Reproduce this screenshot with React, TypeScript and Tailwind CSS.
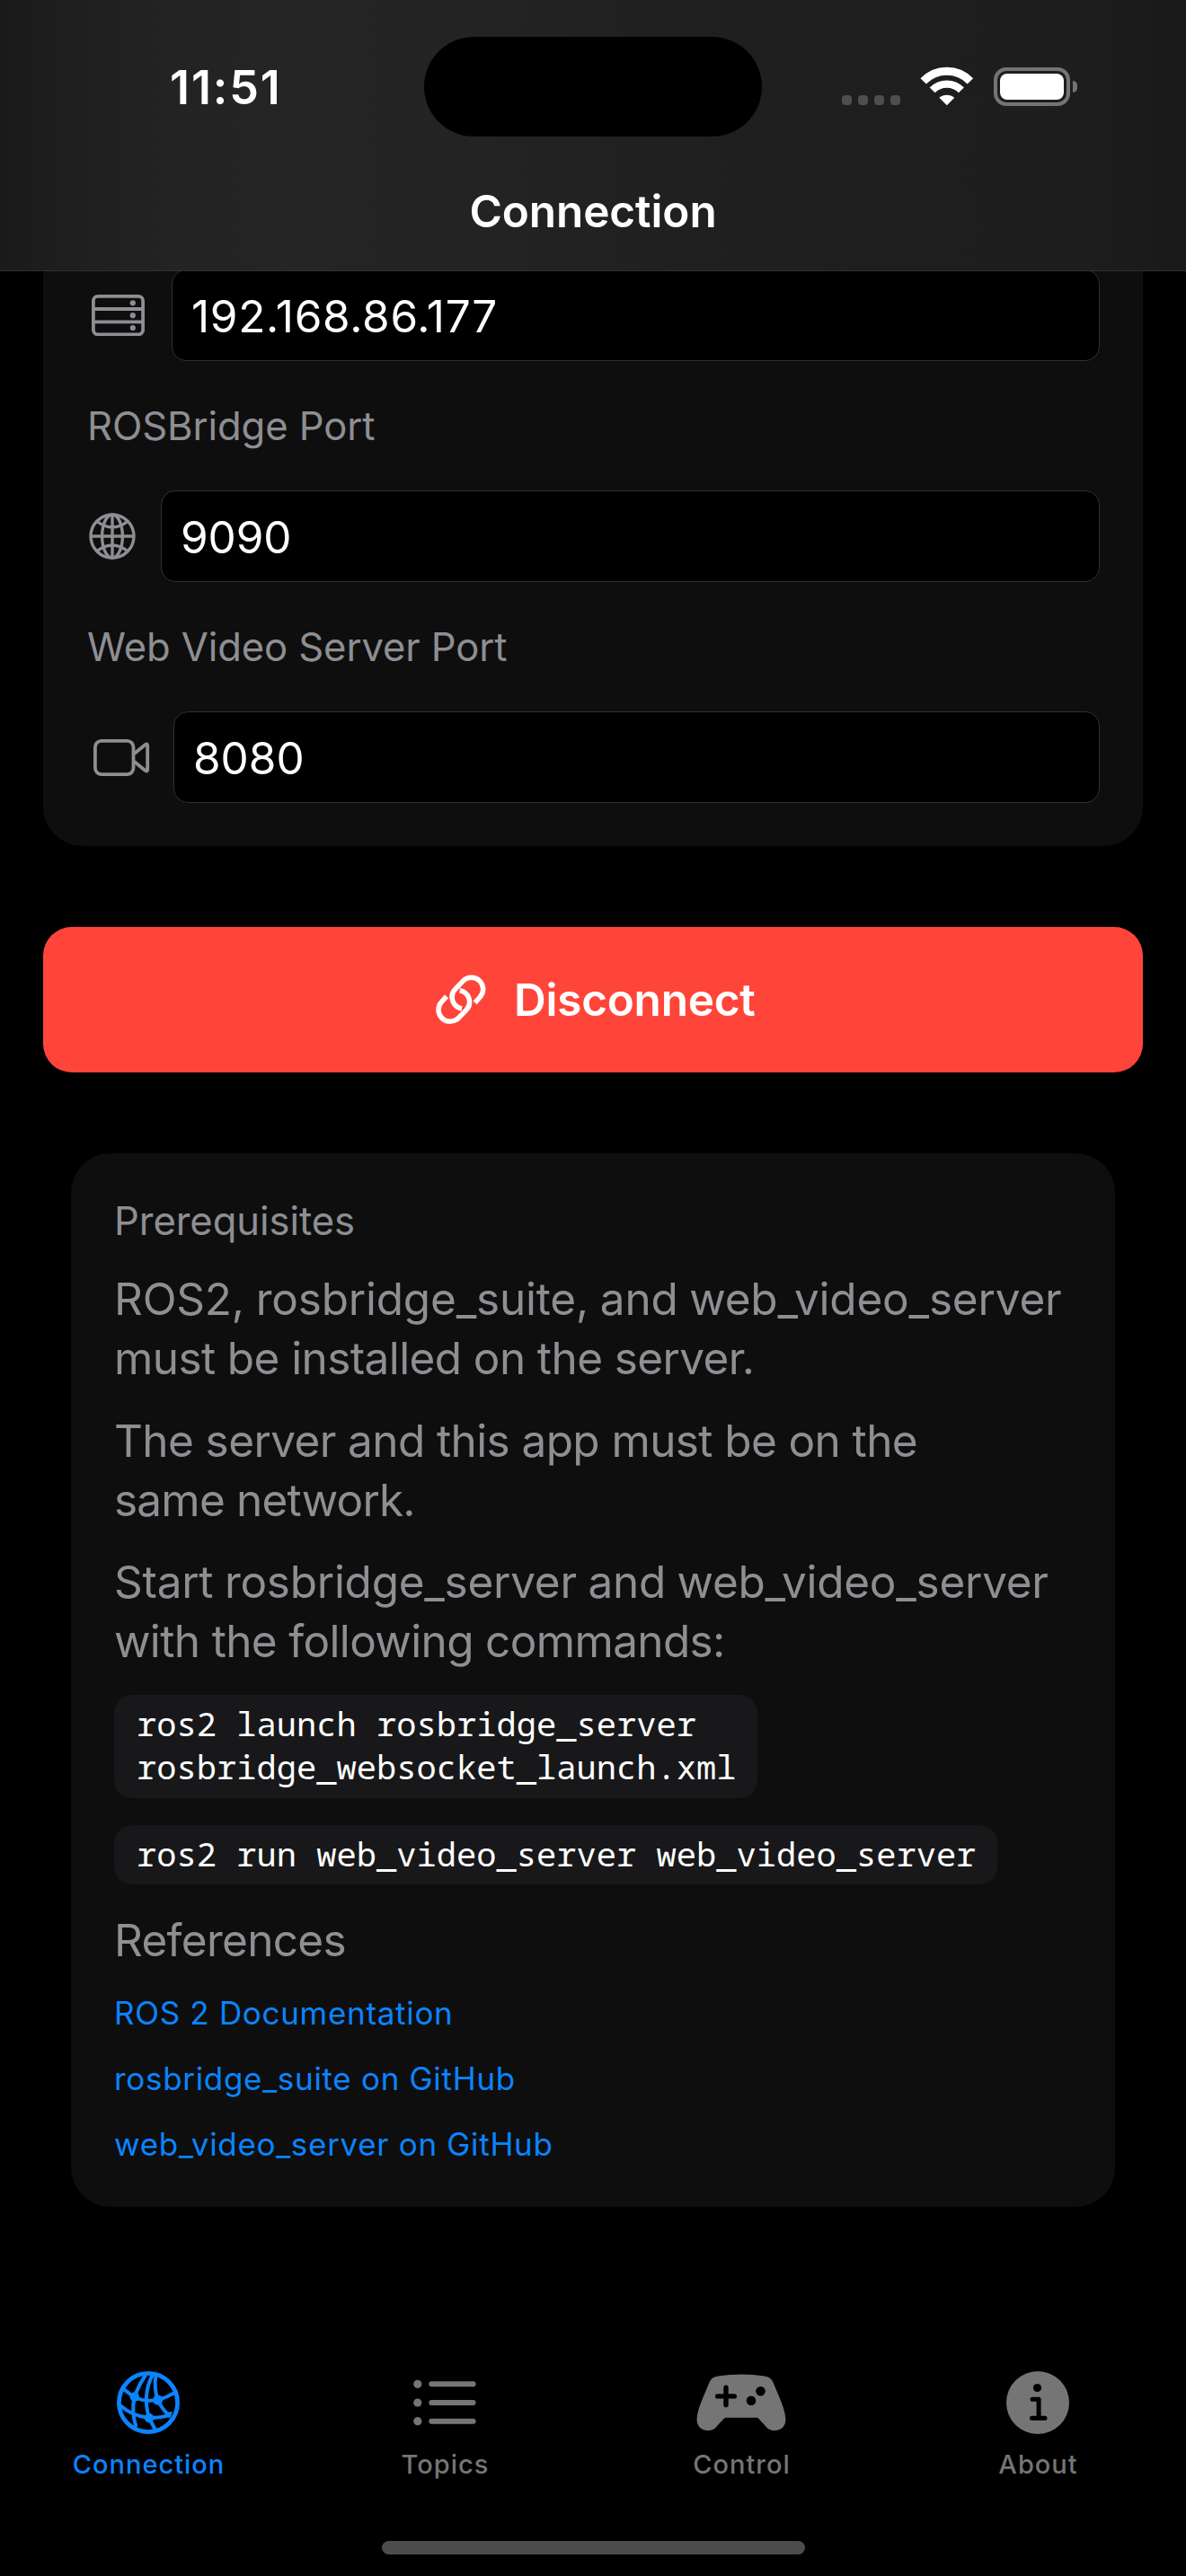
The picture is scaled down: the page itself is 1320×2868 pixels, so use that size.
import React, { ReactNode } from "react";

function StatusBar() {
  return (
    <div className="flex h-[190px] items-start">
      <div className="w-[472px] pt-[64px] pl-[189px] text-[52px] leading-[68px] font-semibold tracking-[1.9px]">11:51</div>
      <div className="mt-[41px] h-[111px] w-[376px] rounded-full bg-black" />
      <div className="mt-[74px] ml-[89px] flex items-start">
        <div className="mt-[32px] flex gap-[7px]">
          {[0, 1, 2, 3].map((i) => (
            <span key={i} className="h-[11px] w-[11px] rounded-[4px] bg-[#4e4e4e]" />
          ))}
        </div>
        <svg className="ml-[22px] h-[45px] w-[60px]" viewBox="0 0 60 45">
          <g fill="none" stroke="#fff">
            <path d="M3.7 16.4 A36.2 36.2 0 0 1 55.9 16.4" strokeWidth="9" />
            <path d="M13.7 26.4 A22.5 22.5 0 0 1 45.9 26.4" strokeWidth="8.4" />
          </g>
          <path d="M21.3 34.8 A13 13 0 0 1 38.3 34.8 L29.8 43.3 Z" fill="#fff" />
        </svg>
        <div className="mt-[1px] ml-[22px] h-[43px] w-[85px] rounded-[14px] border-[4px] border-[#747474] p-[3px]">
          <div className="h-full w-full rounded-[8px] bg-white" />
        </div>
        <div className="mt-[16px] ml-[3px] h-[13px] w-[5px] rounded-r-full bg-[#747474]" />
      </div>
    </div>
  );
}

function ServerIcon() {
  return (
    <svg className="h-[46px] w-[59px]" viewBox="0 0 59 46">
      <g fill="none" stroke="#8e8e93" strokeWidth="3.8">
        <rect x="1.9" y="1.9" width="55.2" height="42.4" rx="5" />
        <path d="M2 16H57M2 30.3H57" />
      </g>
      <g fill="#8e8e93">
        <circle cx="45.8" cy="9.3" r="3.1" />
        <circle cx="45.8" cy="23.2" r="3.1" />
        <circle cx="45.8" cy="37" r="3.1" />
      </g>
    </svg>
  );
}

function GlobeIcon() {
  return (
    <svg className="h-[52px] w-[52px]" viewBox="0 0 52 52" fill="none" stroke="#8e8e93" strokeWidth="3.4">
      <circle cx="26" cy="26" r="24" />
      <ellipse cx="26" cy="26" rx="11.4" ry="24" />
      <path d="M26 2V50M2 26H50M9 9.5Q26 22.5 43 9.5M9 42.5Q26 29.5 43 42.5" />
    </svg>
  );
}

function VideoIcon() {
  return (
    <svg className="h-[41px] w-[63px]" viewBox="0 0 63 41" fill="none" stroke="#8e8e93" strokeWidth="3.8" strokeLinejoin="round">
      <rect x="1.9" y="1.9" width="42.6" height="37.2" rx="7" />
      <path d="M45.5 16 L57.5 6.2 Q60.2 4.3 60.2 7 V34 Q60.2 36.7 57.5 34.8 L45.5 25" />
    </svg>
  );
}

function LinkIcon() {
  return (
    <svg className="h-[58px] w-[58px]" viewBox="41 42 174 174" fill="none" stroke="#fff" strokeWidth="16.5">
      <path d="M175 139 L190.6 121.6 A39 39 0 0 0 135.4 66.4 L109.4 93.4 A39 39 0 0 0 131 159" />
      <path d="M80 118 L64.4 135.4 A39 39 0 0 0 119.6 190.6 L145.6 163.6 A39 39 0 0 0 124 98" />
    </svg>
  );
}

function Field({ icon, value }: { icon: ReactNode; value: string }) {
  return (
    <div className="flex h-[102px] items-center">
      {icon}
      <div className="flex h-[102px] flex-1 items-center rounded-[16px] border border-[#303032] bg-black pt-[2px] pl-[21px] text-[49.5px]">
        {value}
      </div>
    </div>
  );
}

function Label({ children }: { children: ReactNode }) {
  return (
    <div className="mt-[46px] mb-[44px] h-[54px] text-[43.6px] leading-[54px] tracking-[-0.1px] whitespace-nowrap text-[#8e8e93]">
      {children}
    </div>
  );
}

function Tab({ label, color, icon }: { label: string; color: string; icon: ReactNode }) {
  return (
    <div className={`flex w-[330px] flex-col items-center ${color}`}>
      <div className="flex h-[72px] items-center">{icon}</div>
      <div className="mt-[15px] pl-px text-[29px] leading-[36px] font-medium tracking-[1px]">{label}</div>
    </div>
  );
}

const networkIcon = (
  <svg className="h-[72px] w-[72px]" viewBox="14 14 72 72" fill="none" stroke="currentColor" strokeWidth="4">
    <circle cx="50" cy="50" r="32.6" strokeWidth="4.8" />
    <path d="M21.7 34.3L34.7 44Q39 31 47.3 19M34.7 44Q31 60 36.5 77M34.7 44Q47 49.5 60.7 47Q71 44 79 39.3M60.7 47Q56 34 58.5 19.5M55 18.5Q43 42 51 67Q54.5 74 57.7 80M19 53.3Q32 65 51 67Q64 67 75 63.3M60.7 47Q65 57 73 64" />
    <g fill="currentColor" stroke="none">
      <circle cx="34.7" cy="43.5" r="5.2" />
      <circle cx="60.7" cy="47" r="5.5" />
      <circle cx="51" cy="67" r="5.2" />
      <path d="M69 61L77 60L74 68Z" />
    </g>
  </svg>
);

const listIcon = (
  <svg className="h-[52px] w-[70px]" viewBox="0 0 70 52" fill="currentColor">
    {[5.3, 26, 46.7].map((y) => (
      <g key={y}>
        <circle cx="4.8" cy={y} r="4.6" />
        <rect x="17.3" y={y - 3} width="52.3" height="6" rx="3" />
      </g>
    ))}
  </svg>
);

const gamepadIcon = (
  <svg className="h-[64px] w-[100px]" viewBox="0 0 100 64">
    <path
      fill="currentColor"
      d="M14.5 9.5 C16.5 4.8 19 3.4 24 2.4 C40 -0.3 60 -0.3 76 2.4 C81 3.4 83.5 4.8 85.5 9.5 C91 23 99.4 40 99.4 51 C99.4 58 94.5 63 87.5 63 C82.5 63 79.5 61.5 76.5 57.5 L69.5 50 C68.5 49 68 48.7 67 48.7 H33 C32 48.7 31.5 49 30.5 50 L23.5 57.5 C20.5 61.5 17.5 63 12.5 63 C5.5 63 0.6 58 0.6 51 C0.6 40 9 23 14.5 9.5 Z"
    />
    <path d="M33 15.2V34.6M23.7 24.9H42.3" stroke="#000" strokeWidth="5.4" strokeLinecap="round" />
    <circle cx="71.5" cy="19.2" r="5.3" fill="#000" />
    <circle cx="61" cy="29.8" r="5.3" fill="#000" />
  </svg>
);

const infoIcon = (
  <svg className="h-[72px] w-[72px]" viewBox="0 0 72 72">
    <circle cx="36" cy="36" r="35" fill="currentColor" />
    <circle cx="35.5" cy="19.5" r="4.6" fill="#000" />
    <path d="M30 32.2H37.1V53.3M29.5 53.3H44" fill="none" stroke="#000" strokeWidth="5" strokeLinecap="round" strokeLinejoin="round" />
  </svg>
);

export default function App() {
  return (
    <div className="flex h-[2868px] w-[1320px] flex-col overflow-hidden bg-black font-['Inter',sans-serif] text-white">
      <header className="relative z-10 h-[302px] shrink-0 border-b border-[#303030] bg-[linear-gradient(90deg,#191a19_0%,#1e1e1e_5%,#232323_14%,#252525_24%,#232323_42%,#1f1f1f_62%,#1d1d1d_92%,#191919_100%)]">
        <StatusBar />
        <h1 className="pt-[12px] text-center text-[49.5px] leading-[66px] font-semibold tracking-[-0.1px]">Connection</h1>
      </header>

      <main className="-mt-[2px] flex h-[2318px] shrink-0 flex-col">
        <section className="mx-[48px] rounded-b-[44px] bg-[#0e0e0e] pr-[48px] pb-[48px] pl-[49px]">
          <div className="tracking-[0.7px]">
            <Field icon={<div className="w-[94px] pl-[5px]"><ServerIcon /></div>} value="192.168.86.177" />
          </div>
          <Label>ROSBridge Port</Label>
          <div className="tracking-[-0.1px]">
            <Field icon={<div className="w-[82px] pl-[2px]"><GlobeIcon /></div>} value="9090" />
          </div>
          <Label>Web Video Server Port</Label>
          <Field icon={<div className="w-[96px] pl-[7px]"><VideoIcon /></div>} value="8080" />
        </section>

        <button className="mx-[48px] mt-[90px] flex h-[162px] items-center rounded-[32px] bg-[#ff453a] pl-[435.5px]">
          <LinkIcon />
          <span className="pt-[1px] pl-[30.5px] text-[49.5px] font-[560] tracking-[-0.25px]">Disconnect</span>
        </button>

        <section className="mx-[79px] mt-[90px] flex h-[1173px] flex-col items-start rounded-[44px] bg-[#0e0e0e] pt-[49px] pl-[48px] text-[49.5px] leading-[66px] whitespace-nowrap text-[#8e8e93]">
          <h2 className="text-[43.6px] leading-[54px] tracking-[-0.07px]">Prerequisites</h2>
          <p className="mt-[26px]">
            <span className="block tracking-[-0.2px] [word-spacing:-1px]">ROS2, rosbridge_suite, and web_video_server</span>
            <span className="block tracking-[-0.6px]">must be installed on the server.</span>
          </p>
          <p className="mt-[26px] tracking-[-0.6px]">
            The server and this app must be on the
            <br />
            <span className="tracking-[-0.8px]">same network.</span>
          </p>
          <p className="mt-[25px]">
            <span className="block tracking-[-0.27px] [word-spacing:-1px]">Start rosbridge_server and web_video_server</span>
            <span className="block tracking-[-0.65px]">with the following commands:</span>
          </p>
          <code className="mt-[27px] h-[115px] w-[716px] rounded-[20px] bg-[#18181a] pt-[8px] pl-[25px] font-['Noto_Sans_Mono','Liberation_Mono',monospace] text-[37.08px] leading-[48px] text-white">
            ros2 launch rosbridge_server
            <br />
            rosbridge_websocket_launch.xml
          </code>
          <code className="mt-[30px] h-[66px] w-[983px] rounded-[20px] bg-[#18181a] pt-[8px] pl-[25px] font-['Noto_Sans_Mono','Liberation_Mono',monospace] text-[37.08px] leading-[48px] text-white">
            ros2 run web_video_server web_video_server
          </code>
          <h3 className="mt-[29px] tracking-[-0.7px]">References</h3>
          <nav className="mt-[24px] flex flex-col gap-[25px] text-[35px] leading-[48px] tracking-[0.69px] text-[#0a84ff]">
            <a>ROS 2 Documentation</a>
            <a>rosbridge_suite on GitHub</a>
            <a>web_video_server on GitHub</a>
          </nav>
        </section>
      </main>

      <footer className="flex flex-1 flex-col items-center">
        <div className="flex pt-[21px]">
          <Tab label="Connection" color="text-[#0a84ff]" icon={networkIcon} />
          <Tab label="Topics" color="text-[#757575]" icon={listIcon} />
          <Tab label="Control" color="text-[#757575]" icon={gamepadIcon} />
          <Tab label="About" color="text-[#757575]" icon={infoIcon} />
        </div>
        <div className="mt-[67px] h-[15px] w-[471px] rounded-full bg-[#4c4c4c]" />
      </footer>
    </div>
  );
}
